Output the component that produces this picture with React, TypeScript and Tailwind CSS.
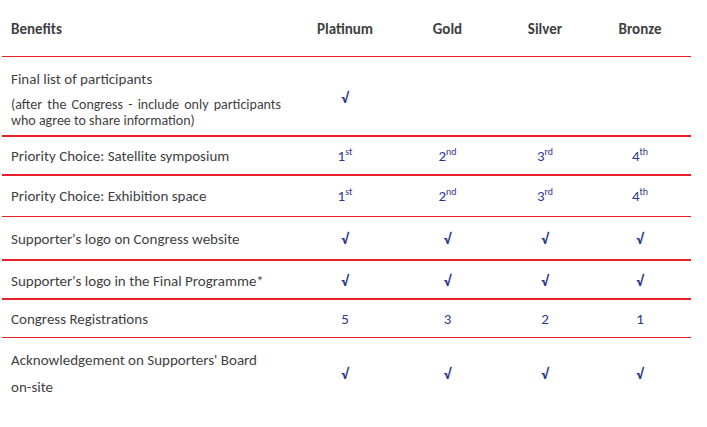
const values = "text-[#2e3790]"

type Row = {
  label: React.ReactNode
  cells: React.ReactNode[]
  className: string
}

function Ord({ n, s }: { n: string; s: string }) {
  return (
    <span>
      {n}
      <sup className="text-[10px] relative -top-[6px]">{s}</sup>
    </span>
  )
}

const tick = <span className="font-semibold">√</span>

const rows: Row[] = [
  {
    label: (
      <div className="pt-[3px] self-start">
        <p className="leading-[18px]">Final list of participants</p>
        <div className="mt-[9px] w-[270px] text-[14px] leading-[16px]">
          <p className="text-justify [text-align-last:justify]">
            (after the Congress - include only participants
          </p>
          <p>who agree to share information)</p>
        </div>
      </div>
    ),
    cells: [tick, "", "", ""],
    className: "h-[80px] border-b-2 pt-[4px]",
  },
  {
    label: "Priority Choice: Satellite symposium",
    cells: [<Ord n="1" s="st" />, <Ord n="2" s="nd" />, <Ord n="3" s="rd" />, <Ord n="4" s="th" />],
    className: "h-[39px] border-b-2 pt-[1px]",
  },
  {
    label: "Priority Choice: Exhibition space",
    cells: [<Ord n="1" s="st" />, <Ord n="2" s="nd" />, <Ord n="3" s="rd" />, <Ord n="4" s="th" />],
    className: "h-[41px] border-b pt-[1px]",
  },
  {
    label: "Supporter's logo on Congress website",
    cells: [tick, tick, tick, tick],
    className: "h-[44px] border-b-2 pt-[2px]",
  },
  {
    label: "Supporter's logo in the Final Programme*",
    cells: [tick, tick, tick, tick],
    className: "h-[39px] border-b-2 pt-[3px]",
  },
  {
    label: "Congress Registrations",
    cells: ["5", "3", "2", "1"],
    className: "h-[38px] border-b pt-[2px]",
  },
  {
    label: (
      <div className="leading-[27px]">
        <p>Acknowledgement on Supporters' Board</p>
        <p>on-site</p>
      </div>
    ),
    cells: [tick, tick, tick, tick],
    className: "h-[66px] pt-[6px]",
  },
]

const colW = ["w-[98px]", "w-[107px]", "w-[88px]", "w-[102px]"]

export default function App() {
  return (
    <div
      className="w-[707px] h-[427px] bg-white text-[15px] text-[#3f3f3f] pl-[2px]"
      style={{ fontFamily: "Carlito, Lato, 'Liberation Sans', sans-serif" }}
    >
      <div className="w-[689px]">
        <div className="flex items-center h-[57px] border-b border-[#e8202a] font-bold pt-[3px]">
          <div className="flex-1 pl-[9px]">Benefits</div>
          {["Platinum", "Gold", "Silver", "Bronze"].map((h, i) => (
            <div key={h} className={`${colW[i]} text-center`}>
              {h}
            </div>
          ))}
        </div>
        {rows.map((r, idx) => (
          <div key={idx} className={`flex items-center border-[#e8202a] ${r.className}`}>
            <div className="flex-1 pl-[9px] flex">{r.label}</div>
            {r.cells.map((c, i) => (
              <div key={i} className={`${colW[i]} text-center ${values}`}>
                {c}
              </div>
            ))}
          </div>
        ))}
      </div>
    </div>
  )
}
